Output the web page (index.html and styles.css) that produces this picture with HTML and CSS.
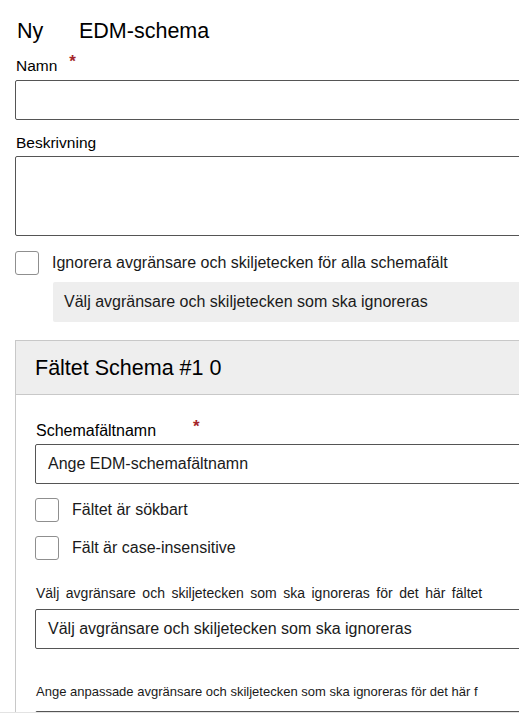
FILE: index.html
```html
<!DOCTYPE html>
<html lang="sv">
<head>
<meta charset="utf-8">
<title>Ny EDM-schema</title>
<link rel="stylesheet" href="styles.css">
</head>
<body>
<div class="page">
  <h1 class="title"><span class="ny">Ny</span><span>EDM-schema</span></h1>

  <div class="label">Namn<span class="req">*</span></div>
  <div class="input"></div>

  <div class="label label-desc">Beskrivning</div>
  <div class="textarea"></div>

  <div class="check-row check-top">
    <span class="box"></span>
    <span class="check-text">Ignorera avgränsare och skiljetecken för alla schemafält</span>
  </div>
  <div class="disabled-select">Välj avgränsare och skiljetecken som ska ignoreras</div>

  <section class="field">
    <div class="field-head">Fältet Schema #1 0</div>
    <div class="field-body">
      <div class="label label-field">Schemafältnamn<span class="req req-wide">*</span></div>
      <div class="input input-text">Ange EDM-schemafältnamn</div>

      <div class="check-row check-first">
        <span class="box"></span>
        <span class="check-text">Fältet är sökbart</span>
      </div>
      <div class="check-row check-second">
        <span class="box"></span>
        <span class="check-text">Fält är case-insensitive</span>
      </div>

      <div class="small-label">Välj avgränsare och skiljetecken som ska ignoreras för det här fältet</div>
      <div class="input input-text select">Välj avgränsare och skiljetecken som ska ignoreras</div>

      <div class="small-label small-label-2">Ange anpassade avgränsare och skiljetecken som ska ignoreras för det här f</div>
      <div class="input last-input"></div>
    </div>
  </section>
</div>
<div class="footer"></div>
</body>
</html>
```

FILE: styles.css
```css
html, body {
  margin: 0;
  padding: 0;
  overflow: hidden;
  background: #fff;
}
body {
  font-family: "Liberation Sans", Arial, sans-serif;
  color: #000;
  width: 519px;
  height: 725px;
}
.page {
  padding-left: 15px;
  width: 620px;
}
.title {
  margin: 17px 0 0 2px;
  font-size: 21.5px;
  font-weight: normal;
  line-height: 28px;
  display: flex;
}
.ny {
  width: 62px;
}
.label {
  margin-top: 11px;
  margin-left: 1px;
  font-size: 15.5px;
  line-height: 20px;
}
.req {
  color: #a4262c;
  margin-left: 12px;
  font-size: 17px;
  font-weight: bold;
  position: relative;
  top: -4px;
}
.req-wide {
  margin-left: 37px;
}
.label-desc {
  margin-top: 13px;
}
.input {
  margin-top: 4px;
  height: 40px;
  box-sizing: border-box;
  border: 1px solid #555;
  border-radius: 2px;
  width: 600px;
}
.textarea {
  margin-top: 3px;
  height: 80px;
  box-sizing: border-box;
  border: 1px solid #555;
  border-radius: 2px;
  width: 600px;
}
.check-row {
  display: flex;
  align-items: center;
  height: 24px;
}
.check-top {
  margin-top: 15px;
}
.box {
  width: 24px;
  height: 24px;
  box-sizing: border-box;
  border: 1px solid #8f8f8f;
  border-radius: 3px;
  flex: none;
}
.check-text {
  margin-left: 13px;
  font-size: 16px;
  line-height: 20px;
  color: #1a1a1a;
}
.disabled-select {
  margin: 7px 0 0 38px;
  height: 40px;
  background: #eeeeee;
  border-radius: 2px;
  padding-left: 11px;
  font-size: 16px;
  line-height: 40px;
  color: #1a1a1a;
}
.field {
  margin-top: 18px;
  border-top: 1px solid #c8c8c8;
  border-left: 1px solid #c8c8c8;
  height: 400px;
}
.field-head {
  height: 54px;
  box-sizing: border-box;
  background: #eeeeee;
  border-bottom: 1px solid #c8c8c8;
  padding-left: 19px;
  font-size: 21.5px;
  line-height: 54px;
}
.field-body {
  padding: 26px 0 0 19px;
}
.field-body .label-field {
  margin-top: 0;
  font-size: 16px;
}
.field-body .input {
  margin-top: 3px;
}
.input-text {
  padding-left: 12px;
  font-size: 16px;
  line-height: 38px;
  color: #1a1a1a;
}
.check-first {
  margin-top: 14px;
}
.check-second {
  margin-top: 14px;
}
.small-label {
  margin-top: 24px;
  margin-left: 1px;
  font-size: 14px;
  word-spacing: 2.6px;
  line-height: 18px;
  color: #1a1a1a;
}
.field-body .select {
  margin-top: 7px;
}
.small-label-2 {
  margin-top: 34px;
  font-size: 13px;
  word-spacing: 0;
}
.field-body .last-input {
  margin-top: 10px;
}
.footer {
  position: fixed;
  left: 0;
  right: 0;
  bottom: 0;
  height: 12px;
  background: #fff;
  border-top: 1px solid #e3e3e3;
}
```
